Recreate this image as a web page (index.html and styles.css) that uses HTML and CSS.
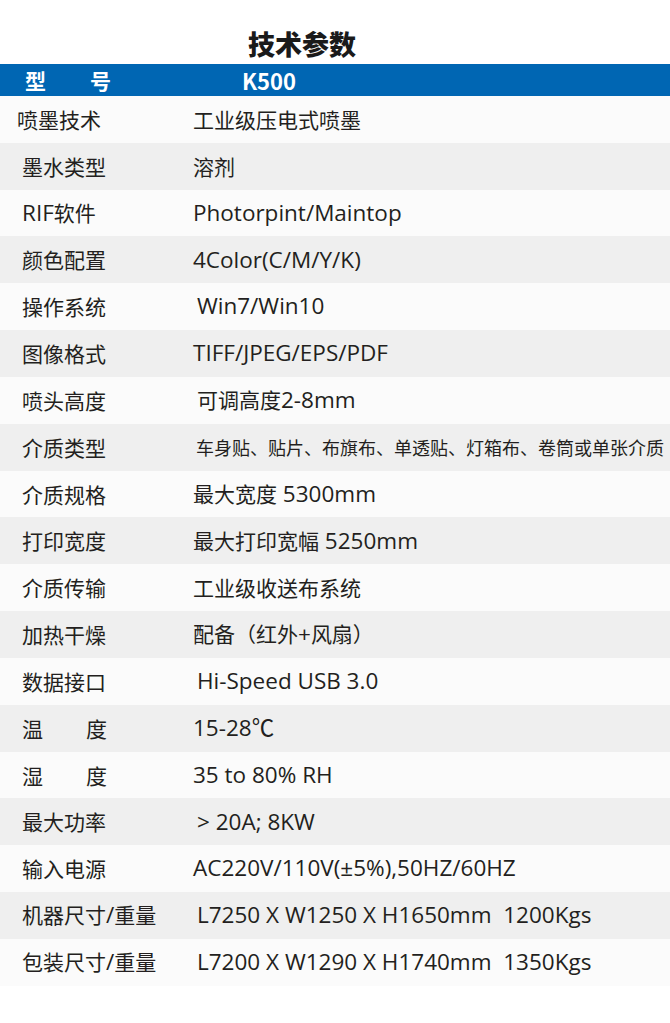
FILE: index.html
```html
<!DOCTYPE html>
<html lang="zh-CN">
<head>
<meta charset="utf-8">
<title>技术参数</title>
<link rel="stylesheet" href="styles.css">
</head>
<body>
<div class="page">
  <h1 class="title">技术参数</h1>
  <div class="head">
    <div class="label spread"><span>型</span><span>号</span></div>
    <div class="model">K500</div>
  </div>
  <div class="table">
    <div class="row light"><div class="label first">喷墨技术</div><div class="value">工业级压电式喷墨</div></div>
    <div class="row gray"><div class="label">墨水类型</div><div class="value">溶剂</div></div>
    <div class="row light"><div class="label"><span class="en">RIF</span>软件</div><div class="value en">Photorpint/Maintop</div></div>
    <div class="row gray"><div class="label">颜色配置</div><div class="value en">4Color(C/M/Y/K)</div></div>
    <div class="row light"><div class="label">操作系统</div><div class="value en ind">Win7/Win10</div></div>
    <div class="row gray"><div class="label">图像格式</div><div class="value en">TIFF/JPEG/EPS/PDF</div></div>
    <div class="row light"><div class="label">喷头高度</div><div class="value ind">可调高度<span class="en">2-8mm</span></div></div>
    <div class="row gray"><div class="label">介质类型</div><div class="value small">车身贴、贴片、布旗布、单透贴、灯箱布、卷筒或单张介质</div></div>
    <div class="row light"><div class="label">介质规格</div><div class="value">最大宽度<span class="en"> 5300mm</span></div></div>
    <div class="row gray"><div class="label">打印宽度</div><div class="value">最大打印宽幅<span class="en"> 5250mm</span></div></div>
    <div class="row light"><div class="label">介质传输</div><div class="value">工业级收送布系统</div></div>
    <div class="row gray"><div class="label">加热干燥</div><div class="value">配备（红外<span class="en">+</span>风扇）</div></div>
    <div class="row light"><div class="label">数据接口</div><div class="value en ind">Hi-Speed USB 3.0</div></div>
    <div class="row gray"><div class="label spread"><span>温</span><span>度</span></div><div class="value en">15-28℃</div></div>
    <div class="row light"><div class="label spread"><span>湿</span><span>度</span></div><div class="value en">35 to 80% RH</div></div>
    <div class="row gray"><div class="label">最大功率</div><div class="value en ind">&gt; 20A; 8KW</div></div>
    <div class="row light"><div class="label">输入电源</div><div class="value en">AC220V/110V(±5%),50HZ/60HZ</div></div>
    <div class="row gray"><div class="label">机器尺寸<span class="en">/</span>重量</div><div class="value en ind">L7250 X W1250 X H1650mm&nbsp;&nbsp;1200Kgs</div></div>
    <div class="row light"><div class="label">包装尺寸<span class="en">/</span>重量</div><div class="value en ind">L7200 X W1290 X H1740mm&nbsp;&nbsp;1350Kgs</div></div>
  </div>
</div>
</body>
</html>
```

FILE: styles.css
```css
* { box-sizing: border-box; }
html, body { margin: 0; padding: 0; background: #ffffff; }
body {
  font-family: "Noto Sans CJK SC", "Noto Sans", sans-serif;
  color: #231f20;
}
.page { width: 670px; }
.title {
  margin: 0;
  height: 64px;
  padding-top: 26px;
  text-align: center;
  font-size: 27px;
  line-height: 36px;
  font-weight: 900;
  color: #1a1a1a;
  text-indent: -66px;
}
.head {
  height: 32px;
  background: #0066b3;
  color: #ffffff;
  display: grid;
  grid-template-columns: 242px 1fr;
  align-items: center;
  font-size: 21px;
  font-weight: 700;
}
.head .model { font-size: 22px; }
.table { display: flex; flex-direction: column; }
.row {
  height: 46.84px;
  display: grid;
  grid-template-columns: 193px 1fr;
  align-items: center;
  font-size: 21px;
  line-height: 1;
}
.row.gray { background: #efefef; }
.row.light { background: #fbfbfb; }
.label { padding-left: 22px; white-space: nowrap; }
.label.first { padding-left: 17px; }
.label.spread {
  display: flex;
  justify-content: space-between;
  width: 107px;
}
.head .label.spread { width: 86px; padding-left: 0; margin-left: 25px; }
.value { white-space: nowrap; }
.value.ind { padding-left: 4px; }
.value.small { font-size: 18px; padding-left: 3px; }
.en {
  font-family: "Open Sans", "Noto Sans CJK SC", sans-serif;
  font-size: 22.5px;
}
```
